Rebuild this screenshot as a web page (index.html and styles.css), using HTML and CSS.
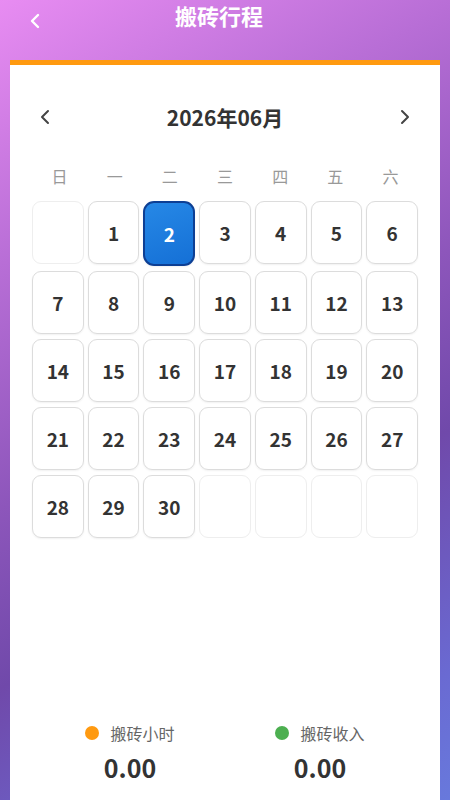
FILE: index.html
```html
<!DOCTYPE html>
<html lang="zh">

<head>
  <meta charset="UTF-8">
  <title>搬砖行程</title>
  <link rel="stylesheet" href="styles.css">
</head>

<body>
  <div class="page">
    <div class="top-bar">
      <span class="back">
        <svg width="12" height="16" viewBox="0 0 12 16"><path d="M9 2 L3 8 L9 14" fill="none" stroke="#fff" stroke-width="2.4" stroke-linecap="round" stroke-linejoin="round"/></svg>
      </span>
      <h1 class="title">搬砖行程</h1>
    </div>

    <div class="card">
      <div class="month-row">
        <span class="arrow">
          <svg width="12" height="18" viewBox="0 0 12 18"><path d="M9 3 L3 9 L9 15" fill="none" stroke="#444" stroke-width="2" stroke-linecap="round" stroke-linejoin="round"/></svg>
        </span>
        <div class="month">2026年06月</div>
        <span class="arrow">
          <svg width="12" height="18" viewBox="0 0 12 18"><path d="M3 3 L9 9 L3 15" fill="none" stroke="#444" stroke-width="2" stroke-linecap="round" stroke-linejoin="round"/></svg>
        </span>
      </div>

      <div class="week">
        <span>日</span><span>一</span><span>二</span><span>三</span><span>四</span><span>五</span><span>六</span>
      </div>

      <div class="days">
        <div class="day empty"></div>
        <div class="day">1</div>
        <div class="day selected">2</div>
        <div class="day">3</div>
        <div class="day">4</div>
        <div class="day">5</div>
        <div class="day">6</div>
        <div class="day">7</div>
        <div class="day">8</div>
        <div class="day">9</div>
        <div class="day">10</div>
        <div class="day">11</div>
        <div class="day">12</div>
        <div class="day">13</div>
        <div class="day">14</div>
        <div class="day">15</div>
        <div class="day">16</div>
        <div class="day">17</div>
        <div class="day">18</div>
        <div class="day">19</div>
        <div class="day">20</div>
        <div class="day">21</div>
        <div class="day">22</div>
        <div class="day">23</div>
        <div class="day">24</div>
        <div class="day">25</div>
        <div class="day">26</div>
        <div class="day">27</div>
        <div class="day">28</div>
        <div class="day">29</div>
        <div class="day">30</div>
        <div class="day empty"></div>
        <div class="day empty"></div>
        <div class="day empty"></div>
        <div class="day empty"></div>
      </div>

      <!-- 统计 -->
      <div class="stats">
        <div class="stat">
          <div class="stat-label"><i class="dot orange"></i>搬砖小时</div>
          <div class="stat-value">0.00</div>
        </div>
        <div class="stat">
          <div class="stat-label"><i class="dot green"></i>搬砖收入</div>
          <div class="stat-value">0.00</div>
        </div>
      </div>
    </div>
  </div>
</body>

</html>
```

FILE: styles.css
```css
body {
  margin: 0;
  font-family: "Noto Sans CJK SC", "Noto Sans", sans-serif;
  color: #333;
}

.page {
  height: 800px;
  display: flex;
  flex-direction: column;
  background: linear-gradient(150deg, #e88cf2 0%, #b86ed6 25%, #8d56bb 48%, #7049aa 65%, #6a6ad2 88%, #6879dc 100%);
  overflow: hidden;
}

.top-bar {
  height: 60px;
  display: flex;
  justify-content: center;
  position: relative;
}

.back {
  position: absolute;
  left: 29px;
  top: 10px;
}

.title {
  margin: 0 12px 0 0;
  font-size: 22px;
  font-weight: 700;
  color: #fff;
  line-height: 30px;
}

.card {
  flex: 1;
  margin: 0 10px;
  background: #fff;
  border-top: 5px solid #ff9a10;
  padding: 0 22px;
  display: flex;
  flex-direction: column;
}

.month-row {
  display: flex;
  align-items: center;
  justify-content: space-between;
  padding: 36px 7px 0;
  height: 32px;
}

.arrow {
  display: flex;
}

.month {
  font-size: 21px;
  font-weight: 700;
  color: #333;
}

.week {
  display: grid;
  grid-template-columns: repeat(7, 1fr);
  margin-top: 32px;
  text-align: center;
  font-size: 16px;
  color: #999;
  line-height: 22px;
}

.days {
  display: grid;
  grid-template-columns: repeat(7, 1fr);
  gap: 5px 4px;
  margin-top: 14px;
}

.day {
  height: 61px;
  border: 1.5px solid #dcdcdc;
  border-radius: 9px;
  display: flex;
  align-items: center;
  justify-content: center;
  font-size: 19px;
  font-weight: 700;
  color: #333;
  box-shadow: 0 1px 2px rgba(0, 0, 0, 0.06);
}

.day.empty {
  border-color: #eee;
  box-shadow: none;
}

.day.selected {
  background: linear-gradient(160deg, #2688e6, #1570d6);
  border: 2px solid #0d3f94;
  border-radius: 11px;
  color: #fff;
}

.stats {
  margin-top: auto;
  display: grid;
  grid-template-columns: 190px 190px;
  justify-content: center;
  padding-bottom: 18px;
  margin-left: -22px;
  margin-right: -22px;
}

.stat {
  display: flex;
  flex-direction: column;
  align-items: center;
}

.stat-label {
  display: flex;
  align-items: center;
  font-size: 16px;
  color: #666;
  line-height: 22px;
}

.dot {
  width: 14px;
  height: 14px;
  border-radius: 50%;
  margin-right: 11px;
}

.dot.orange {
  background: #ff9a10;
}

.dot.green {
  background: #4caf50;
}

.stat-value {
  margin-top: 8px;
  font-size: 25px;
  font-weight: 700;
  color: #333;
  line-height: 30px;
}
```
